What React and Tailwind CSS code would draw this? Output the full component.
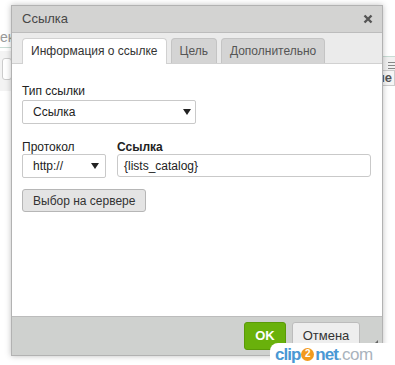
import React from "react";

const font = { fontFamily: '"Liberation Sans", Arial, sans-serif' };

const Arrow = () => (
  <svg width="8" height="6" viewBox="0 0 8 6" className="shrink-0">
    <path d="M0 0h8L4 6z" fill="#222" />
  </svg>
);

export default function App() {
  return (
    <div className="relative w-[395px] h-[365px] bg-white overflow-hidden text-[12px] text-[#333]" style={font}>
      {/* page behind the dialog */}
      <div className="absolute left-0 top-[27px] text-[#9a9a9a] text-[14px]">ек</div>
      <div className="absolute left-0 top-[47px] w-[12px] h-px bg-[#c8dcd4]" />
      <div className="absolute left-0 top-[51px] w-[12px] h-[40px] bg-[#f3f3f3]" />
      <div className="absolute left-[2px] top-[58px] w-[10px] h-[22px] border border-[#ccc] rounded-[3px] bg-white" />
      <div className="absolute left-[383px] top-[56px] w-[12px] h-px bg-[#c8dcd4]" />
      <div className="absolute left-[383px] top-[57px] w-[12px] h-[27px] bg-[#f1f1f1]" />
      <div className="absolute left-[388px] top-[62px] w-[7px] flex flex-col gap-[2px]">
        <div className="h-px bg-[#888]" />
        <div className="h-px bg-[#888]" />
        <div className="h-px bg-[#888]" />
      </div>
      <div className="absolute left-[382px] top-[70px] w-[13px] h-[16px] border border-[#ccc] bg-[#f5f5f5] text-[13px] font-bold text-[#555] leading-[14px] overflow-hidden">
        <span className="ml-[-6px]">не</span>
      </div>

      {/* dialog */}
      <div className="absolute left-[11px] top-[5px] w-[372px] h-[351px] flex flex-col border border-[#b2b2b2] shadow-[0_0_6px_rgba(0,0,0,0.25)] bg-white">
        <div className="h-[27px] shrink-0 bg-[#d3d3d2] border-b border-[#bcbcbc] flex items-center justify-between pl-[10px] pr-[9px]">
          <span className="text-[13px] text-[#474747]">Ссылка</span>
          <svg width="10" height="10" viewBox="0 0 10 10">
            <path d="M1.5 1.5l7 7M8.5 1.5l-7 7" stroke="#555" strokeWidth="2.4" />
          </svg>
        </div>
        <div className="h-[31px] shrink-0 bg-[#ebebeb] border-b border-[#d1d1d1] flex items-end gap-[4px] pl-[10px]">
          <div className="h-[26px] px-[8px] bg-white border border-b-0 border-[#d1d1d1] rounded-t-[4px] flex items-center text-[#333] mb-[-1px] pb-[1px]">
            Информация о ссылке
          </div>
          <div className="h-[25px] px-[8px] bg-[#d4d4d4] border border-b-0 border-[#c4c4c4] rounded-t-[4px] flex items-center text-[#555]">
            Цель
          </div>
          <div className="h-[25px] px-[8px] bg-[#d4d4d4] border border-b-0 border-[#c4c4c4] rounded-t-[4px] flex items-center text-[#555]">
            Дополнительно
          </div>
        </div>
        <div className="flex-1 bg-white px-[10px] pt-[20px]">
          <div className="text-[#222] leading-[15px]">Тип ссылки</div>
          <div className="mt-[1px] w-[174px] h-[24px] border border-[#c9c9c9] rounded-[2px] flex items-center justify-between pl-[10px] pr-[4px] text-[#222]">
            <span>Ссылка</span>
            <Arrow />
          </div>
          <div className="mt-[16px] flex gap-[11px]">
            <div>
              <div className="text-[#222] leading-[14px]">Протокол</div>
              <div className="w-[84px] h-[24px] border border-[#c9c9c9] rounded-[2px] flex items-center justify-between pl-[10px] pr-[6px] text-[#222]">
                <span>http://</span>
                <Arrow />
              </div>
            </div>
            <div>
              <div className="text-[#222] font-bold leading-[14px]">Ссылка</div>
              <div className="w-[254px] h-[23px] border border-[#c9c9c9] rounded-[3px] flex items-center pl-[6px] text-[#222]">
                {"{lists_catalog}"}
              </div>
            </div>
          </div>
          <div className="mt-[11px] inline-flex h-[23px] px-[10px] items-center bg-[#e4e4e4] border border-[#b6b6b6] rounded-[3px] text-[#333]">
            Выбор на сервере
          </div>
        </div>
        <div className="h-[39px] shrink-0 bg-[#cfd1cf] border-t border-[#bcbcbc] flex items-start justify-end gap-[6px] pt-[5px] pr-[22px]">
          <div className="w-[42px] h-[28px] bg-[#69b10b] border border-[#5a9a08] rounded-[3px] flex items-center justify-center text-white font-bold text-[13px]">
            OK
          </div>
          <div className="w-[68px] h-[28px] bg-[#eeeeee] border border-[#bcbcbc] rounded-[3px] flex items-center justify-center text-[#333] text-[13px]">
            Отмена
          </div>
        </div>
        <svg className="absolute right-[4px] bottom-[10px]" width="5" height="5" viewBox="0 0 5 5">
          <path d="M5 0v5H0z" fill="#666" />
        </svg>
      </div>

      {/* watermark */}
      <div className="absolute left-[270px] top-[343px] w-[125px] h-[22px] bg-white rounded-tl-[8px] flex items-center pl-[5px]">
        <span className="text-[17px] font-bold tracking-[-1px] text-[#4a98d4] leading-none">clip</span>
        <span className="mx-[1px] w-[13px] h-[13px] rounded-full bg-[#f29a1f] text-white text-[10px] font-bold flex items-center justify-center leading-none">2</span>
        <span className="text-[17px] font-bold tracking-[-1px] text-[#4a98d4] leading-none">net</span>
        <span className="text-[17px] text-[#a9b3bd] tracking-[-0.5px] leading-none">.com</span>
      </div>
    </div>
  );
}
